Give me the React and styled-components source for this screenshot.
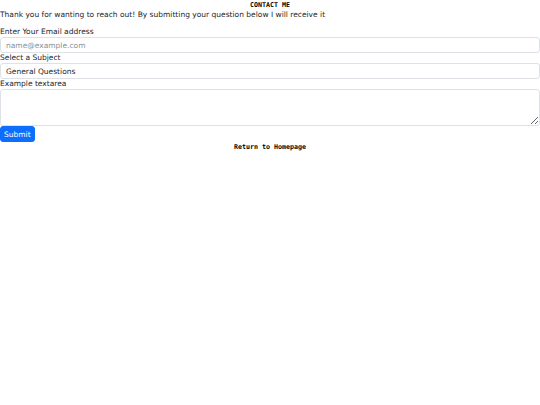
import React from 'react';
import styled, { createGlobalStyle } from 'styled-components';

const GlobalStyle = createGlobalStyle`
  html, body {
    margin: 0;
    padding: 0;
    background: #fff;
  }
  body {
    font-family: "DejaVu Sans", sans-serif;
    font-size: 7.5px;
    line-height: 1.5;
    color: #212529;
  }
  * {
    box-sizing: border-box;
  }
`;

const Page = styled.div`
  display: flex;
  flex-direction: column;
  width: 540px;
`;

const Title = styled.h1`
  margin: 0;
  font-family: "DejaVu Sans Mono", monospace;
  font-size: 6.67px;
  font-weight: bold;
  line-height: 10px;
  text-align: center;
  color: #000;
`;

const Intro = styled.p`
  margin: 0 0 7px;
  line-height: 10px;
`;

const Form = styled.form`
  display: flex;
  flex-direction: column;
  align-items: flex-start;
`;

const Label = styled.label`
  display: block;
  line-height: 10px;
`;

const fieldStyles = `
  display: block;
  width: 100%;
  margin: 0;
  padding: 0 5px;
  font-family: "DejaVu Sans", sans-serif;
  font-size: 7.5px;
  color: #212529;
  background: #fff;
  border: 1px solid #dee2e6;
  border-radius: 3px;
  outline: none;
`;

const Input = styled.input`
  ${fieldStyles}
  height: 16px;

  &::placeholder {
    color: #8a9096;
  }
`;

const Select = styled.select`
  ${fieldStyles}
  height: 16px;
  appearance: none;
`;

const TextArea = styled.textarea`
  ${fieldStyles}
  height: 37px;
  padding: 3px 5px;
  resize: vertical;
`;

const SubmitButton = styled.button`
  height: 16px;
  padding: 0 3px;
  font-family: "DejaVu Sans", sans-serif;
  font-size: 7.5px;
  color: #fff;
  background: #0d6efd;
  border: 1px solid #0d6efd;
  border-radius: 3px;
  cursor: pointer;
`;

const HomeLink = styled.a`
  display: block;
  font-family: "DejaVu Sans Mono", monospace;
  font-size: 6.67px;
  font-weight: bold;
  line-height: 10px;
  text-align: center;
  color: #000;
  text-decoration: none;
`;

const App = () => (
  <Page>
    <GlobalStyle />
    <Title>CONTACT ME</Title>
    <Intro>
      Thank you for wanting to reach out! By submitting your question below I will receive it
    </Intro>
    <Form onSubmit={(e) => e.preventDefault()}>
      <Label htmlFor="email">Enter Your Email address</Label>
      <Input id="email" type="email" placeholder="name@example.com" />
      <Label htmlFor="subject">Select a Subject</Label>
      <Select id="subject" defaultValue="general">
        <option value="general">General Questions</option>
      </Select>
      <Label htmlFor="message">Example textarea</Label>
      <TextArea id="message" />
      <SubmitButton type="submit">Submit</SubmitButton>
    </Form>
    <HomeLink href="#">Return to Homepage</HomeLink>
  </Page>
);

export default App;
